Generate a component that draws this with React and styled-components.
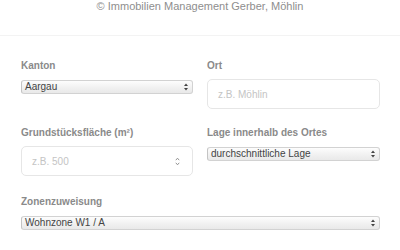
import React from "react";
import styled, { createGlobalStyle } from "styled-components";

const Global = createGlobalStyle`
  html, body { margin: 0; padding: 0; background: #fff; }
  body { font-family: "Liberation Sans", Arial, sans-serif; width: 400px; height: 250px; overflow: hidden; }
`;

const Header = styled.div`
  text-align: center;
  font-size: 11px;
  line-height: 13px;
  color: #8e8e8e;
  height: 36px;
  border-bottom: 1px solid #f3f3f3;
  box-sizing: border-box;
`;

const Form = styled.div`
  padding: 24px 20px 0 21px;
  display: flex;
  flex-direction: column;
`;

const Row = styled.div`
  display: grid;
  grid-template-columns: ${(p) => (p.$full ? "1fr" : "172px 173px")};
  column-gap: 14px;
  margin-bottom: ${(p) => p.$mb || 18}px;
  align-items: start;
`;

const Field = styled.div`
  display: flex;
  flex-direction: column;
`;

const Label = styled.label`
  font-size: 10px;
  line-height: 12px;
  font-weight: bold;
  color: #8a8a8a;
  margin-bottom: 7px;
`;

const SelectWrap = styled.div`
  position: relative;
  height: 14px;
  margin-top: 1px;
  box-sizing: border-box;
  border: 1px solid #d2d2d2;
  border-left-color: #c4c4c4;
  border-radius: 3px;
  background: linear-gradient(#fdfdfd, #f1f1f1 55%, #e9e9e9);
  font-size: 10px;
  line-height: 12px;
  color: #444;
  padding-left: 3px;
`;

const Arrows = styled.svg`
  position: absolute;
  right: 4px;
  top: 2px;
`;

const Input = styled.div`
  position: relative;
  height: 30px;
  box-sizing: border-box;
  border: 1px solid #e6e6e6;
  border-radius: 5px;
  background: #fff;
  padding-left: 10px;
  display: flex;
  align-items: center;
  font-size: 10px;
  color: #c4c4c4;
`;

const Spin = styled.svg`
  position: absolute;
  right: 12px;
  top: 10px;
`;

const Select = ({ children }) => (
  <SelectWrap>
    {children}
    <Arrows width="4" height="8" viewBox="0 0 4 8">
      <path d="M0 3 L2 0.5 L4 3 Z M0 5 L2 7.5 L4 5 Z" fill="#444" />
    </Arrows>
  </SelectWrap>
);

export default function App() {
  return (
    <>
      <Global />
      <Header>© Immobilien Management Gerber, Möhlin</Header>
      <Form>
        <Row>
          <Field>
            <Label>Kanton</Label>
            <Select>Aargau</Select>
          </Field>
          <Field>
            <Label>Ort</Label>
            <Input>z.B. Möhlin</Input>
          </Field>
        </Row>
        <Row $mb={20}>
          <Field>
            <Label>Grundstücksfläche (m²)</Label>
            <Input>
              z.B. 500
              <Spin width="5" height="9" viewBox="0 0 5 9">
                <path d="M0.8 3.2 L2.5 1.2 L4.2 3.2 M0.8 5.8 L2.5 7.8 L4.2 5.8" fill="none" stroke="#888" strokeWidth="0.9" />
              </Spin>
            </Input>
          </Field>
          <Field>
            <Label>Lage innerhalb des Ortes</Label>
            <Select>durchschnittliche Lage</Select>
          </Field>
        </Row>
        <Row $full>
          <Field>
            <Label>Zonenzuweisung</Label>
            <Select>Wohnzone W1 / A</Select>
          </Field>
        </Row>
      </Form>
    </>
  );
}
